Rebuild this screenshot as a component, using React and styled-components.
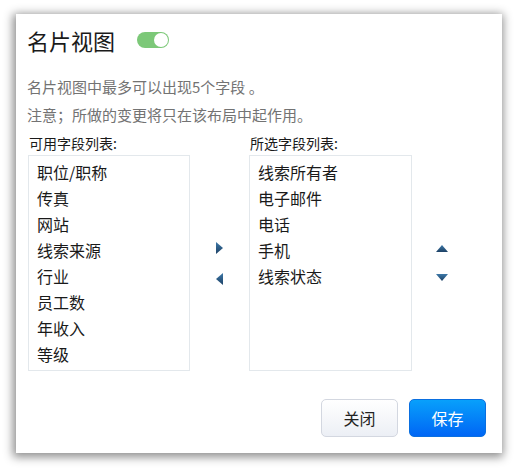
import styled, { createGlobalStyle } from 'styled-components';

const GlobalStyle = createGlobalStyle`
  html, body {
    margin: 0;
    padding: 0;
    background: #ffffff;
  }
  body {
    font-family: "Noto Sans CJK SC", "Noto Sans", sans-serif;
    color: #222;
  }
`;

const Page = styled.div`
  padding: 14px 0 0 16px;
  min-height: 468px;
  box-sizing: border-box;
`;

const Dialog = styled.div`
  width: 486px;
  height: 439px;
  box-sizing: border-box;
  background: #fff;
  box-shadow: -1px 2px 9px 2px rgba(0, 0, 0, 0.45);
  padding: 11px 16px 16px 11px;
  display: flex;
  flex-direction: column;
`;

const Header = styled.div`
  display: flex;
  align-items: center;
  height: 30px;
`;

const Title = styled.h2`
  margin: 0;
  font-size: 22px;
  font-weight: 400;
  line-height: 30px;
  color: #1a1a1a;
`;

const Toggle = styled.span`
  margin-left: 22px;
  width: 32px;
  height: 16px;
  border-radius: 8px;
  background: ${p => (p.$on ? '#7cc878' : '#ccc')};
  position: relative;
  display: inline-block;

  &::after {
    content: '';
    position: absolute;
    top: 1px;
    ${p => (p.$on ? 'right: 1px;' : 'left: 1px;')}
    width: 14px;
    height: 14px;
    border-radius: 50%;
    background: #fff;
  }
`;

const Desc = styled.p`
  margin: ${p => (p.$first ? '18px' : '0')} 0 0 0;
  font-size: 15px;
  line-height: 28px;
  color: #737373;
`;

const Columns = styled.div`
  display: flex;
  margin-top: 4px;
`;

const FieldColumn = styled.div`
  display: flex;
  flex-direction: column;
  margin-left: ${p => p.$offset || 0}px;
`;

const Label = styled.div`
  font-size: 14px;
  line-height: 20px;
  height: 22px;
  color: #1a1a1a;
  padding-left: 1px;
`;

const ListBox = styled.ul`
  list-style: none;
  margin: 0;
  padding: 3px 0 0 8px;
  width: ${p => p.$w}px;
  height: 216px;
  box-sizing: border-box;
  border: 1px solid #e3e8ec;
`;

const Item = styled.li`
  font-size: 16px;
  line-height: 26px;
  color: #1a1a1a;
`;

const ArrowColumn = styled.div`
  width: ${p => p.$w}px;
  margin-top: 22px;
  height: 216px;
  display: flex;
  flex-direction: column;
  align-items: center;
  justify-content: center;
  gap: ${p => p.$gap}px;
`;

const ArrowButton = styled.button`
  border: none;
  background: none;
  padding: 0;
  display: flex;
  cursor: pointer;
`;

const Footer = styled.div`
  margin-top: auto;
  display: flex;
  justify-content: flex-end;
  gap: 11px;
`;

const Button = styled.button`
  width: 77px;
  height: 38px;
  border-radius: 5px;
  font-family: inherit;
  font-size: 16px;
  cursor: pointer;
  border: 1px solid ${p => (p.$primary ? '#0a6fe0' : '#d3d7e0')};
  color: ${p => (p.$primary ? '#fff' : '#222')};
  background: ${p =>
    p.$primary
      ? 'linear-gradient(#08a0fb, #0066f5)'
      : 'linear-gradient(#ffffff, #eceff5)'};
`;

const Triangle = ({ dir }) => {
  const pts = {
    right: '0,0 7,6 0,12',
    left: '7,0 0,6 7,12',
    up: '0,7 6,0 12,7',
    down: '0,0 12,0 6,7',
  }[dir];
  const vertical = dir === 'up' || dir === 'down';
  const w = vertical ? 12 : 7;
  const h = vertical ? 7 : 12;
  return (
    <svg width={w} height={h} viewBox={`0 0 ${w} ${h}`}>
      <defs>
        <linearGradient id={`g-${dir}`} x1="0" y1="0" x2="0" y2="1">
          <stop offset="0" stopColor="#3d78a8" />
          <stop offset="1" stopColor="#1d4165" />
        </linearGradient>
      </defs>
      <polygon points={pts} fill={`url(#g-${dir})`} />
    </svg>
  );
};

const available = ['职位/职称', '传真', '网站', '线索来源', '行业', '员工数', '年收入', '等级'];
const selected = ['线索所有者', '电子邮件', '电话', '手机', '线索状态'];

export default function App() {
  return (
    <>
      <GlobalStyle />
      <Page>
        <Dialog>
          <Header>
            <Title>名片视图</Title>
            <Toggle $on />
          </Header>
          <Desc $first>名片视图中最多可以出现5个字段 。</Desc>
          <Desc>注意；所做的变更将只在该布局中起作用。</Desc>
          <Columns>
            <FieldColumn $offset={1}>
              <Label>可用字段列表:</Label>
              <ListBox $w={162}>
                {available.map(f => (
                  <Item key={f}>{f}</Item>
                ))}
              </ListBox>
            </FieldColumn>
            <ArrowColumn $w={59} $gap={19}>
              <ArrowButton><Triangle dir="right" /></ArrowButton>
              <ArrowButton><Triangle dir="left" /></ArrowButton>
            </ArrowColumn>
            <FieldColumn>
              <Label>所选字段列表:</Label>
              <ListBox $w={163}>
                {selected.map(f => (
                  <Item key={f}>{f}</Item>
                ))}
              </ListBox>
            </FieldColumn>
            <ArrowColumn $w={60} $gap={22}>
              <ArrowButton><Triangle dir="up" /></ArrowButton>
              <ArrowButton><Triangle dir="down" /></ArrowButton>
            </ArrowColumn>
          </Columns>
          <Footer>
            <Button>关闭</Button>
            <Button $primary>保存</Button>
          </Footer>
        </Dialog>
      </Page>
    </>
  );
}
